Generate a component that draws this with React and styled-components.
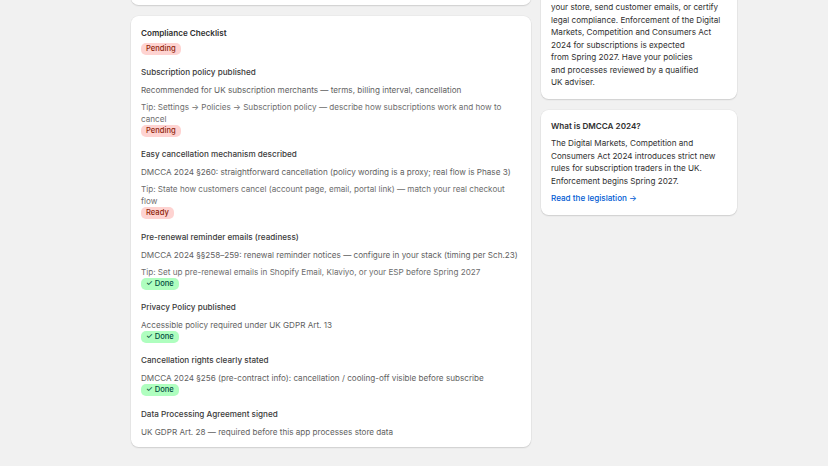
import React, { useLayoutEffect, useRef } from "react"
import styled, { createGlobalStyle } from "styled-components"

const checklist = [
  {
    title: "Subscription policy published",
    detail:
      "Recommended for UK subscription merchants — terms, billing interval, cancellation",
    tip: "Tip: Settings → Policies → Subscription policy — describe how subscriptions work and how to cancel",
    status: "pending",
  },
  {
    title: "Easy cancellation mechanism described",
    detail:
      "DMCCA 2024 §260: straightforward cancellation (policy wording is a proxy; real flow is Phase 3)",
    tip: "Tip: State how customers cancel (account page, email, portal link) — match your real checkout flow",
    status: "ready",
  },
  {
    title: "Pre-renewal reminder emails (readiness)",
    detail:
      "DMCCA 2024 §§258–259: renewal reminder notices — configure in your stack (timing per Sch.23)",
    tip: "Tip: Set up pre-renewal emails in Shopify Email, Klaviyo, or your ESP before Spring 2027",
    status: "done",
  },
  {
    title: "Privacy Policy published",
    detail: "Accessible policy required under UK GDPR Art. 13",
    status: "done",
  },
  {
    title: "Cancellation rights clearly stated",
    detail:
      "DMCCA 2024 §256 (pre-contract info): cancellation / cooling-off visible before subscribe",
    status: "done",
  },
  {
    title: "Data Processing Agreement signed",
    detail: "UK GDPR Art. 28 — required before this app processes store data",
  },
]

const badgeLabels = {
  pending: "Pending",
  ready: "Ready",
  done: "✓ Done",
  info: "Not legal advice",
}

const disclaimerLines = [
  "Guidance only. This app does not change",
  "your store, send customer emails, or certify",
  "legal compliance. Enforcement of the Digital",
  "Markets, Competition and Consumers Act",
  "2024 for subscriptions is expected",
  "from Spring 2027. Have your policies",
  "and processes reviewed by a qualified",
  "UK adviser.",
]

// how far the admin page has been scrolled
const SCROLL_OFFSET = 68

export default function App() {
  const scroller = useRef(null)

  useLayoutEffect(() => {
    if (scroller.current) scroller.current.scrollTop = SCROLL_OFFSET
  }, [])

  return (
    <Viewport ref={scroller}>
      <GlobalStyle />
      <Page>
        <Column>
          <Card>
            <Stack $gap={5}>
              <CardTitle>Readiness overview</CardTitle>
              <Body>
                3 of 6 checks complete. Finish the pending items below before
                <br />
                the DMCCA subscription rules take effect.
              </Body>
            </Stack>
          </Card>

          <Card $pad="10.5px 10px 9.5px">
            <Stack $gap={11.2}>
              <Stack $gap={4}>
                <CardTitle>Compliance Checklist</CardTitle>
                <Badge $tone="pending">{badgeLabels.pending}</Badge>
              </Stack>

              {checklist.map((item) => (
                <Stack $gap={6} key={item.title}>
                  <ItemTitle>{item.title}</ItemTitle>
                  <Stack $gap={5.3}>
                    <div>
                      <Body>{item.detail}</Body>
                      {!item.tip && item.status && (
                        <Badge $tone={item.status}>{badgeLabels[item.status]}</Badge>
                      )}
                    </div>
                    {item.tip && (
                      <div>
                        <Tip>{item.tip}</Tip>
                        {item.status && (
                          <Badge $tone={item.status}>{badgeLabels[item.status]}</Badge>
                        )}
                      </div>
                    )}
                  </Stack>
                </Stack>
              ))}
            </Stack>
          </Card>
        </Column>

        <Column>
          <Card>
            <Stack $gap={5}>
              <CardTitle $lh={12.5}>Disclaimer</CardTitle>
              <Badge $tone="info">{badgeLabels.info}</Badge>
              <SideText>
                {disclaimerLines.map((line, i) => (
                  <React.Fragment key={i}>
                    {line}
                    {i < disclaimerLines.length - 1 && <br />}
                  </React.Fragment>
                ))}
              </SideText>
            </Stack>
          </Card>

          <Card>
            <Stack $gap={5}>
              <CardTitle $lh={12.5}>What is DMCCA 2024?</CardTitle>
              <SideText>
                The Digital Markets, Competition and Consumers Act 2024
                introduces strict new rules for subscription traders in the UK.
                Enforcement begins Spring 2027.
              </SideText>
              <LegislationLink href="#">Read the legislation →</LegislationLink>
            </Stack>
          </Card>
        </Column>
      </Page>
    </Viewport>
  )
}

const GlobalStyle = createGlobalStyle`
  html, body {
    margin: 0;
    padding: 0;
    background: #f1f1f1;
  }

  body {
    font-family: Inter, "Noto Sans", "Liberation Sans", sans-serif;
    color: #303030;
    -webkit-font-smoothing: antialiased;
  }
`

const Viewport = styled.div`
  height: 100vh;
  overflow: hidden;
  background: #f1f1f1;
`

const Page = styled.div`
  display: grid;
  grid-template-columns: 400px 196px;
  column-gap: 10px;
  align-items: start;
  padding: 12px 0 40px 131px;
`

const Column = styled.div`
  display: flex;
  flex-direction: column;
  gap: 11px;
`

const Card = styled.section`
  background: #ffffff;
  border-radius: 7.5px;
  padding: ${(p) => p.$pad || "10px"};
  box-shadow: 0 1px 1.5px rgba(0, 0, 0, 0.12), 0 0 0 0.5px rgba(0, 0, 0, 0.05);
`

const Stack = styled.div`
  display: flex;
  flex-direction: column;
  align-items: stretch;
  gap: ${(p) => p.$gap}px;
`

const CardTitle = styled.h2`
  margin: 0;
  font-size: 8.15px;
  line-height: ${(p) => p.$lh || 12}px;
  font-weight: 600;
  color: #303030;
`

const ItemTitle = styled.h3`
  margin: 0;
  font-size: 8.15px;
  line-height: 12px;
  font-weight: 500;
  color: #3a3a3a;
`

const Body = styled.p`
  margin: 0;
  font-size: 8.15px;
  line-height: 12px;
  color: #616161;
`

const Tip = styled(Body)`
  color: #6d6d6d;
`

const SideText = styled.p`
  margin: 0;
  font-size: 8.15px;
  line-height: 12.5px;
  color: #303030;
`

const LegislationLink = styled.a`
  align-self: flex-start;
  font-size: 8.15px;
  line-height: 12.5px;
  color: #005bd3;
  text-decoration: none;
  font-weight: 500;
`

const badgeTones = {
  pending: { bg: "#fed3d1", fg: "#8e1f0b" },
  ready: { bg: "#fed3d1", fg: "#8e1f0b" },
  done: { bg: "#affebf", fg: "#014b40" },
  info: { bg: "#e3e3e3", fg: "#616161" },
}

const Badge = styled.span`
  display: flex;
  align-items: center;
  width: fit-content;
  align-self: flex-start;
  height: 12px;
  padding: 0 5px;
  border-radius: 5px;
  font-size: 7.6px;
  line-height: 12px;
  font-weight: 500;
  white-space: nowrap;
  background: ${(p) => badgeTones[p.$tone].bg};
  color: ${(p) => badgeTones[p.$tone].fg};
`
